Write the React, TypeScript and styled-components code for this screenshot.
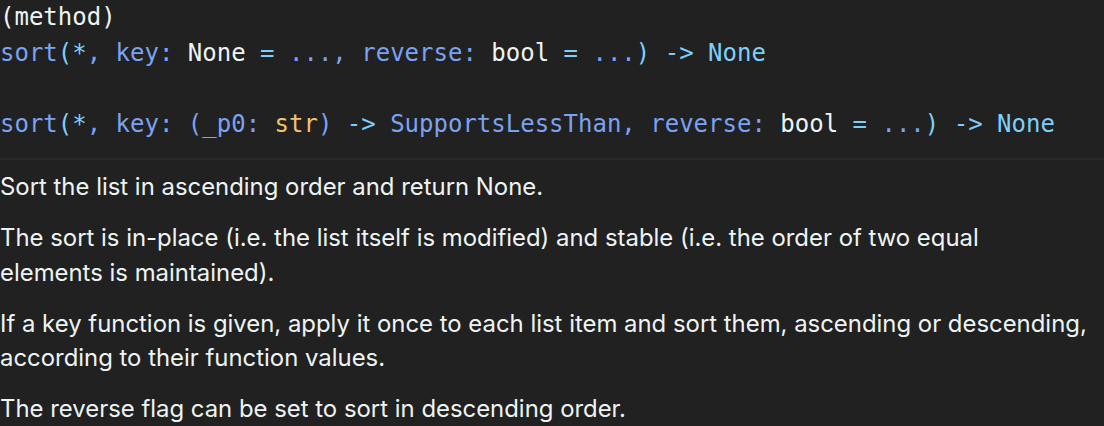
import React from "react";
import styled, { createGlobalStyle } from "styled-components";

const Global = createGlobalStyle`
  html, body { margin: 0; padding: 0; background: #212121; }
  body { overflow: hidden; }
`;

const Hover = styled.div`
  width: 1104px;
  height: 426px;
  background: #212121;
  overflow: hidden;
`;

const CodeBlock = styled.pre`
  margin: 0;
  padding: 0 0 16px 0;
  font-family: "DejaVu Sans Mono", "Liberation Mono", monospace;
  font-size: 24px;
  line-height: 35.5px;
  color: #eef4f4;
  white-space: pre;
`;

const Tok = styled.span<{ $c: "fg" | "blue" | "cyan" | "orange" }>`
  color: ${(p) =>
    p.$c === "blue"
      ? "#7ba3f2"
      : p.$c === "cyan"
      ? "#7dcff9"
      : p.$c === "orange"
      ? "#f5c26c"
      : "#eef4f4"};
`;

const Divider = styled.hr`
  margin: 0;
  border: none;
  height: 2px;
  background: #2a2a2a;
`;

const Docs = styled.div`
  padding: 10px 0 0 0;
  font-family: Inter, "Noto Sans", sans-serif;
  font-size: 23.9px;
  line-height: 34.5px;
  color: #eef4f4;
`;

const Para = styled.p`
  margin: 0 0 16.5px 0;
`;

type T = [string, "fg" | "blue" | "cyan" | "orange"];

const line1: T[] = [
  ["sort", "blue"],
  ["(*", "cyan"],
  [", key: ", "blue"],
  ["None", "fg"],
  [" ", "fg"],
  ["=", "cyan"],
  [" ...", "blue"],
  [", reverse: ", "blue"],
  ["bool", "fg"],
  [" ", "fg"],
  ["=", "cyan"],
  [" ...", "blue"],
  [")", "cyan"],
  [" -> None", "cyan"],
];

const line2: T[] = [
  ["sort", "blue"],
  ["(*", "cyan"],
  [", key: (_p0: ", "blue"],
  ["str", "orange"],
  [")", "blue"],
  [" -> ", "cyan"],
  ["SupportsLessThan, reverse: ", "blue"],
  ["bool", "fg"],
  [" ", "fg"],
  ["=", "cyan"],
  [" ...", "blue"],
  [")", "cyan"],
  [" -> None", "cyan"],
];

const render = (toks: T[]) =>
  toks.map(([t, c], i) => (
    <Tok key={i} $c={c}>
      {t}
    </Tok>
  ));

export default function App() {
  return (
    <Hover>
      <Global />
      <CodeBlock>
        <Tok $c="fg">(method)</Tok>
        {"\n"}
        {render(line1)}
        {"\n\n"}
        {render(line2)}
      </CodeBlock>
      <Divider />
      <Docs>
        <Para>Sort the list in ascending order and return None.</Para>
        <Para>
          The sort is in-place (i.e. the list itself is modified) and stable (i.e. the order of two equal
          <br />
          elements is maintained).
        </Para>
        <Para>
          If a key function is given, apply it once to each list item and sort them, ascending or
          descending, according to their function values.
        </Para>
        <Para>The reverse flag can be set to sort in descending order.</Para>
      </Docs>
    </Hover>
  );
}
